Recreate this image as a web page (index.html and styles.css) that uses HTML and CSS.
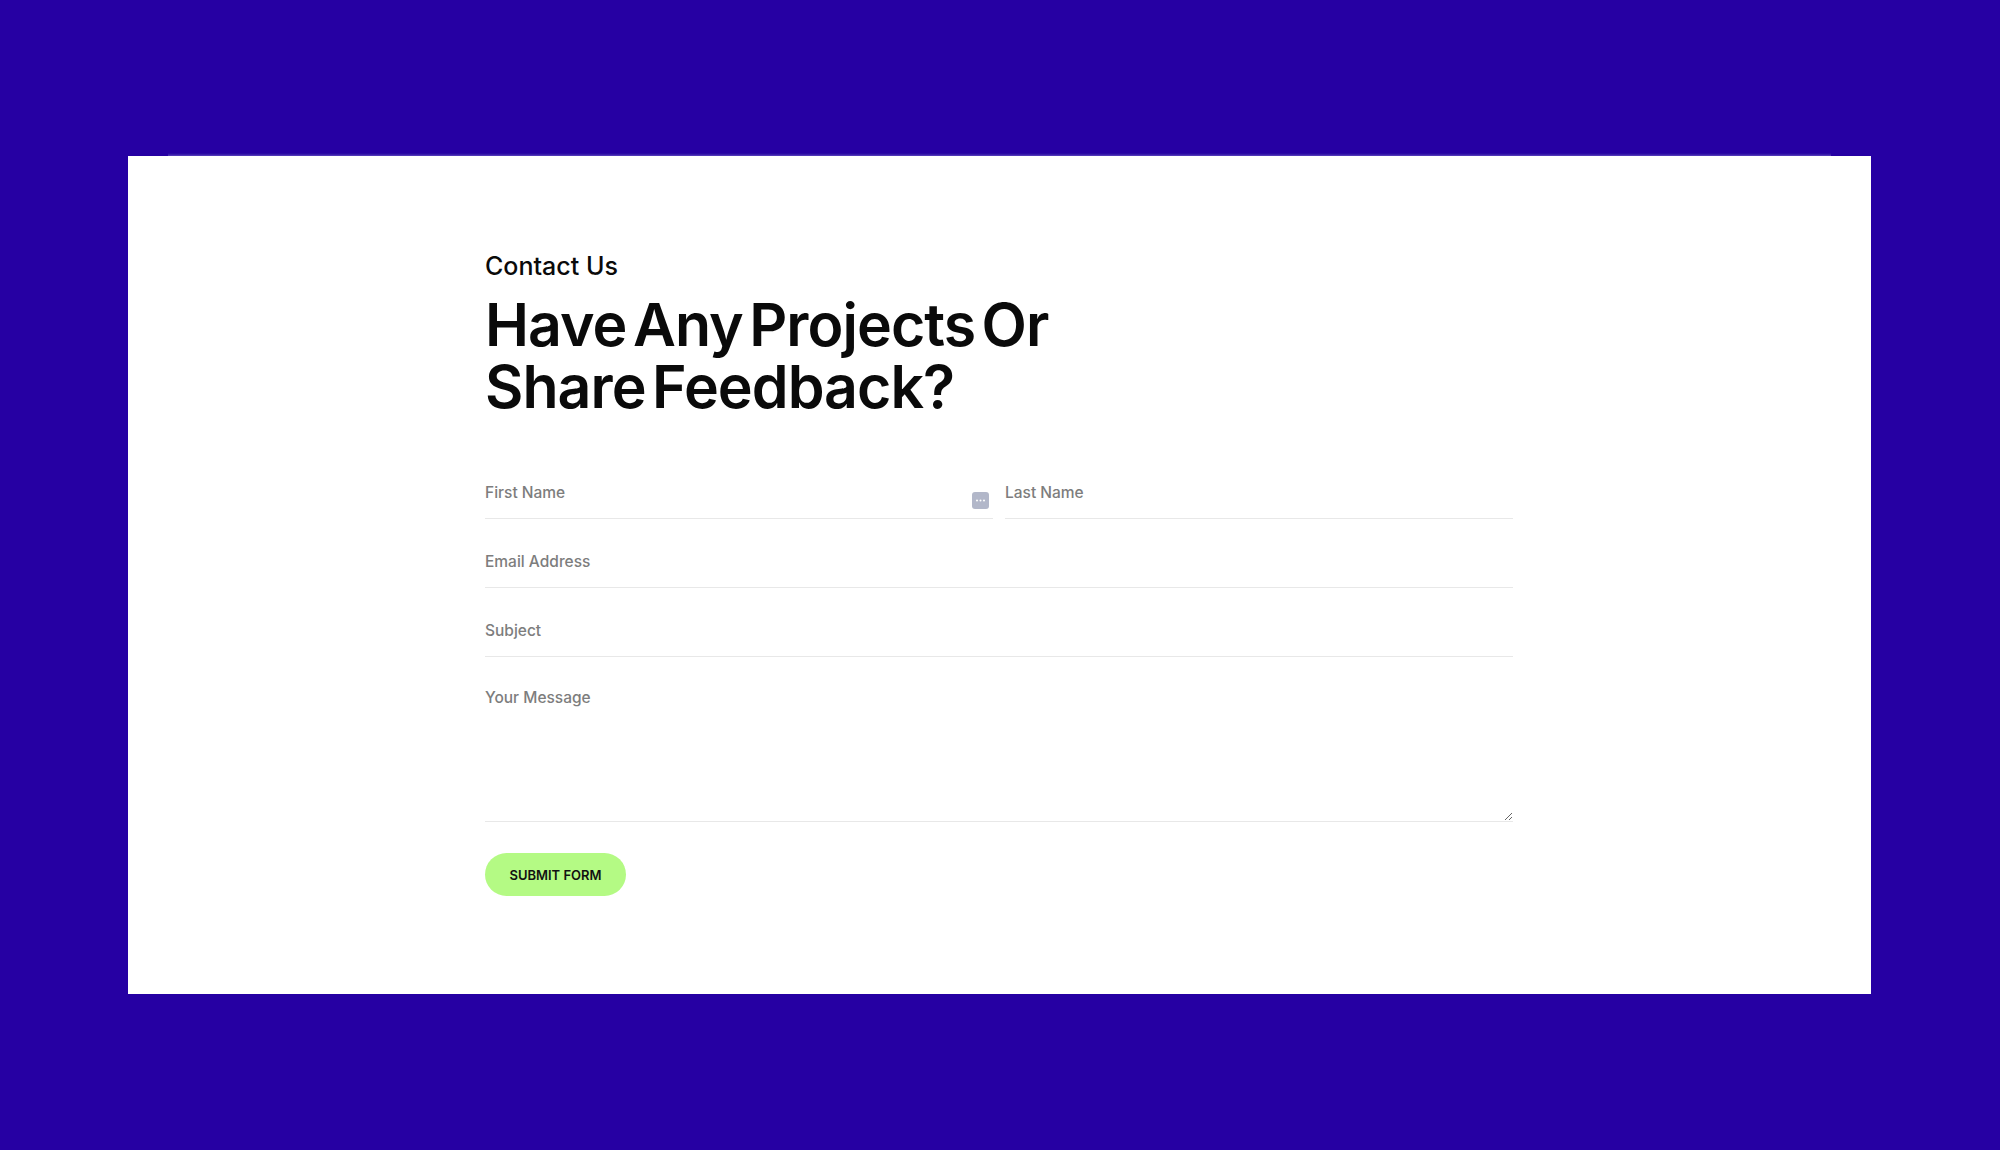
FILE: index.html
```html
<!DOCTYPE html>
<html lang="en">
<head>
<meta charset="utf-8">
<title>Contact Us</title>
<link rel="stylesheet" href="styles.css">
</head>
<body>
<main class="page">
  <section class="panel">
    <div class="content">
      <p class="eyebrow">Contact Us</p>
      <h1 class="title">Have Any Projects Or<br>Share Feedback?</h1>
      <form class="form">
        <div class="row">
          <div class="field field-icon">
            <input class="input" type="text" placeholder="First Name">
            <span class="badge"><svg viewBox="0 0 17 17" width="17" height="17"><rect width="17" height="17" rx="3" fill="#b2b7c9"/><circle cx="5" cy="8.5" r="1" fill="#fff"/><circle cx="8.5" cy="8.5" r="1" fill="#fff"/><circle cx="12" cy="8.5" r="1" fill="#fff"/></svg></span>
          </div>
          <div class="field"><input class="input" type="text" placeholder="Last Name"></div>
        </div>
        <input class="input" type="email" placeholder="Email Address">
        <input class="input" type="text" placeholder="Subject">
        <textarea class="input message" placeholder="Your Message"></textarea>
        <button class="submit" type="button">SUBMIT FORM</button>
      </form>
    </div>
  </section>
</main>
</body>
</html>
```
FILE: styles.css
```css
* { box-sizing: border-box; }
html, body { margin: 0; padding: 0; }
body { background: #2600a3; font-family: "Inter", "Liberation Sans", sans-serif; }
.page { height: 1150px; padding: 156px 129px 156px 128px; }
.panel { position: relative; height: 838px; background: #fff; padding: 96px 358px 0 357px; }
.panel::before { content: ""; position: absolute; left: 40px; right: 40px; top: -3px; height: 3px; background: linear-gradient(#2200a0, #3a1bab 50%, #5a42bd); }
.eyebrow { margin: 0 0 14px; font-size: 25px; line-height: 28px; font-weight: 500; color: #0a0a0a; }
.title { margin: 0 0 47px; font-size: 59px; line-height: 62px; font-weight: 600; letter-spacing: -0.95px; word-spacing: -7.5px; color: #0a0a0a; }
.form { display: flex; flex-direction: column; }
.row { display: flex; gap: 12px; }
.field { position: relative; flex: 1; }
.badge { position: absolute; right: 4px; top: 27px; width: 17px; height: 17px; display: block; }
.badge svg { display: block; }
.input { display: block; width: 100%; height: 54px; margin: 0 0 15px; padding: 1px 0 0; border: 0; border-bottom: 1px solid #e8e8e8; background: transparent; font-family: inherit; font-size: 15.5px; font-weight: 500; color: #333; outline: none; }
.input::placeholder { color: #7d7d7d; opacity: 1; }
.message { height: 150px; padding-top: 16px; margin-bottom: 31px; }
.submit { width: 141px; height: 43px; padding: 0; border: 0; border-radius: 22px; background: #b4fa84; font-family: inherit; font-size: 13px; font-weight: 600; color: #111; }
```
